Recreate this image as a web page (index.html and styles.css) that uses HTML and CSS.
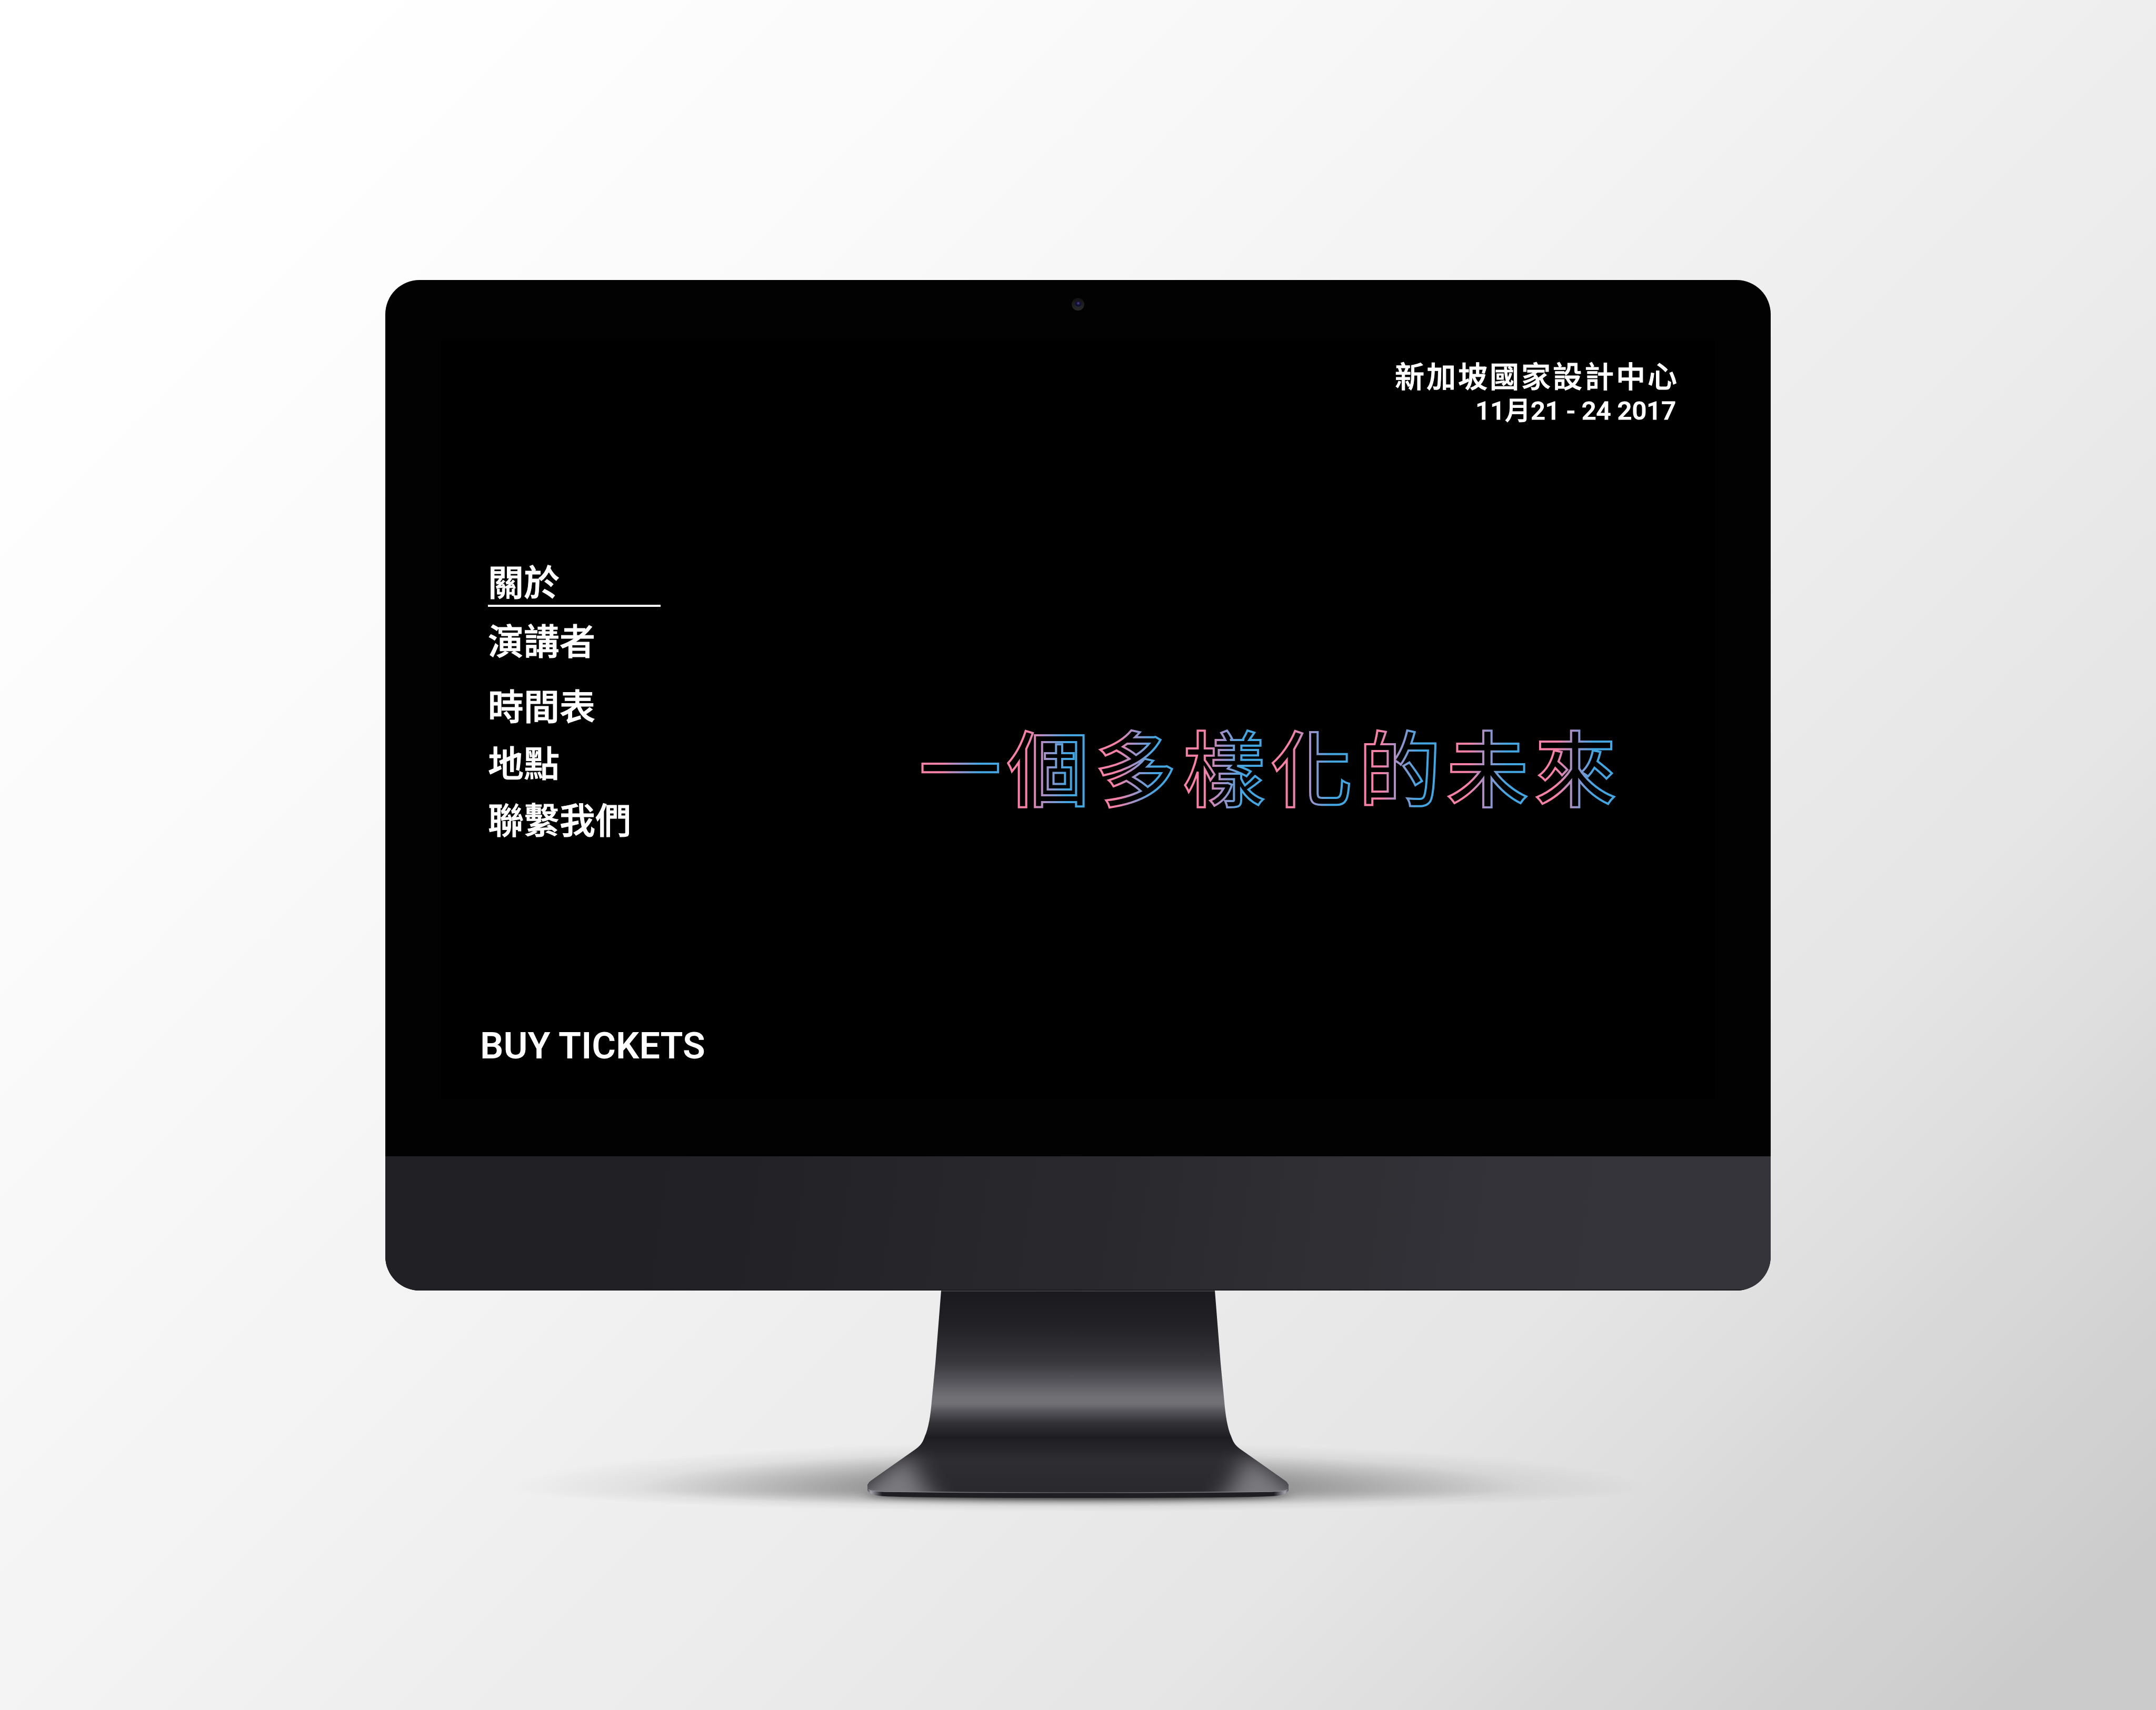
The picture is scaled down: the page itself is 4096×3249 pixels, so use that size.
FILE: index.html
```html
<!DOCTYPE html>
<html lang="zh-Hant">
<head>
<meta charset="utf-8">
<title>一個多樣化的未來</title>
<meta name="viewport" content="width=device-width, initial-scale=1">
<link rel="stylesheet" href="styles.css">
</head>
<body class="stage">
<div class="monitor">
  <div class="bezel bezel-top">
    <svg class="camera" viewBox="0 0 24 24" aria-hidden="true">
      <defs>
        <linearGradient id="ring" x1="0" y1="0" x2="0" y2="1">
          <stop offset="0" stop-color="#101010"/>
          <stop offset="1" stop-color="#2a2a2a"/>
        </linearGradient>
        <radialGradient id="lens" cx=".55" cy=".35" r=".6">
          <stop offset="0" stop-color="#565080"/>
          <stop offset=".4" stop-color="#19154a"/>
          <stop offset=".8" stop-color="#0c0a20"/>
          <stop offset="1" stop-color="#1e3644"/>
        </radialGradient>
      </defs>
      <circle cx="12" cy="12" r="12" fill="url(#ring)"/>
      <circle cx="12" cy="12" r="6" fill="url(#lens)"/>
    </svg>
  </div>
  <div class="screen">
    <header class="event">
      <p class="venue">新加坡國家設計中心</p>
      <p class="dates">11月21 - 24 2017</p>
    </header>
    <main class="content">
      <nav class="menu" aria-label="主選單">
        <ul class="menu-group">
          <li><a class="menu-link active" href="#about">關於</a></li>
          <li><a class="menu-link" href="#speakers">演講者</a></li>
        </ul>
        <ul class="menu-group">
          <li><a class="menu-link" href="#schedule">時間表</a></li>
          <li><a class="menu-link" href="#venue">地點</a></li>
          <li><a class="menu-link" href="#contact">聯繫我們</a></li>
        </ul>
      </nav>
      <h1 class="title">
        <svg class="title-art" viewBox="0 0 1336 200">
          <defs>
            <linearGradient id="tint" gradientUnits="userSpaceOnUse" x1="0" y1="0" x2="167" y2="0" spreadMethod="repeat">
              <stop offset="0" stop-color="#f780a6"/>
              <stop offset=".24" stop-color="#f780a6"/>
              <stop offset=".46" stop-color="#9b92c8"/>
              <stop offset=".68" stop-color="#44a6e1"/>
              <stop offset="1" stop-color="#44a6e1"/>
            </linearGradient>
          </defs>
          <text class="title-text" x="0" y="159">一個多樣化的未來</text>
        </svg>
      </h1>
    </main>
    <footer class="actions">
      <button class="buy" type="button">BUY TICKETS</button>
    </footer>
  </div>
  <div class="bezel bezel-bottom"></div>
  <div class="chin"></div>
</div>
<svg class="stand" viewBox="0 0 2296 480" aria-hidden="true">
  <defs>
    <linearGradient id="metal" gradientUnits="userSpaceOnUse" x1="0" y1="0" x2="0" y2="394">
      <stop offset="0" stop-color="#1a191d"/>
      <stop offset=".15" stop-color="#212025"/>
      <stop offset=".27" stop-color="#2d2c31"/>
      <stop offset=".35" stop-color="#3a393e"/>
      <stop offset=".43" stop-color="#545359"/>
      <stop offset=".51" stop-color="#706f74"/>
      <stop offset=".545" stop-color="#727176"/>
      <stop offset=".59" stop-color="#515056"/>
      <stop offset=".64" stop-color="#323136"/>
      <stop offset=".71" stop-color="#1e1d21"/>
      <stop offset=".75" stop-color="#242328"/>
      <stop offset=".82" stop-color="#2e2d32"/>
      <stop offset="1" stop-color="#29282d"/>
    </linearGradient>
    <linearGradient id="lip" gradientUnits="userSpaceOnUse" x1="748" y1="0" x2="1548" y2="0">
      <stop offset="0" stop-color="#55545b"/>
      <stop offset=".008" stop-color="#a4a3ac"/>
      <stop offset=".035" stop-color="#1f1e23"/>
      <stop offset=".965" stop-color="#1f1e23"/>
      <stop offset=".992" stop-color="#a4a3ac"/>
      <stop offset="1" stop-color="#55545b"/>
    </linearGradient>
    <linearGradient id="rim" gradientUnits="userSpaceOnUse" x1="748" y1="0" x2="1548" y2="0">
      <stop offset="0" stop-color="#8d8c93"/>
      <stop offset=".5" stop-color="#5a595e"/>
      <stop offset="1" stop-color="#8d8c93"/>
    </linearGradient>
    <radialGradient id="cast-up" gradientUnits="userSpaceOnUse" cx="0" cy="0" r="1" gradientTransform="translate(1148 376) scale(1080 88)">
      <stop offset="0" stop-color="#000" stop-opacity=".38"/>
      <stop offset=".38" stop-color="#000" stop-opacity=".34"/>
      <stop offset=".58" stop-color="#000" stop-opacity=".2"/>
      <stop offset=".78" stop-color="#000" stop-opacity=".06"/>
      <stop offset="1" stop-color="#000" stop-opacity="0"/>
    </radialGradient>
    <radialGradient id="cast-down" gradientUnits="userSpaceOnUse" cx="0" cy="0" r="1" gradientTransform="translate(1148 376) scale(1080 44)">
      <stop offset="0" stop-color="#000" stop-opacity=".38"/>
      <stop offset=".38" stop-color="#000" stop-opacity=".34"/>
      <stop offset=".58" stop-color="#000" stop-opacity=".2"/>
      <stop offset=".78" stop-color="#000" stop-opacity=".06"/>
      <stop offset="1" stop-color="#000" stop-opacity="0"/>
    </radialGradient>
    <filter id="soft" x="-30%" y="-60%" width="160%" height="220%"><feGaussianBlur stdDeviation="24 12"/></filter>
    <filter id="contact" x="-10%" y="-200%" width="120%" height="500%"><feGaussianBlur stdDeviation="14 6"/></filter>
    <clipPath id="body">
      <path d="M888 0L877 139L870 211C868 236 864 262 857 277C854 286 850 294 840 301L755 361Q748 366 748 372L748 378Q752 381 780 382Q960 384 1148 384Q1336 384 1516 382Q1544 381 1548 378L1548 372Q1548 366 1541 361L1456 301C1446 294 1442 286 1439 277C1432 262 1428 236 1426 211L1419 139L1408 0Z"/>
    </clipPath>
  </defs>
  <path d="M56 376A1092 100 0 0 1 2240 376Z" fill="url(#cast-up)"/>
  <path d="M56 376A1092 56 0 0 0 2240 376Z" fill="url(#cast-down)"/>
  <ellipse cx="1148" cy="389" rx="400" ry="7" fill="#000" fill-opacity=".8" filter="url(#contact)"/>
  <path d="M748 368L748 379Q750 387 770 390Q800 394 1148 394Q1496 394 1526 390Q1546 387 1548 379L1548 368Z" fill="url(#lip)"/>
  <g clip-path="url(#body)">
    <path d="M700 0H1596V394H700Z" fill="url(#metal)"/>
    <path d="M826 308L690 420H895Q850 370 826 308Z" fill="#7a797e" filter="url(#soft)"/>
    <path d="M1470 308L1606 420H1401Q1446 370 1470 308Z" fill="#7a797e" filter="url(#soft)"/>
  </g>
  <path d="M750 378Q754 381 780 382Q960 384 1148 384Q1336 384 1516 382Q1542 381 1546 378" fill="none" stroke="url(#rim)" stroke-width="1.5"/>
  <path d="M888 1H1408" stroke="#5f5e63" stroke-width="1"/>
</svg>
</body>
</html>
```
FILE: styles.css
```css
* { box-sizing: border-box; }

html, body { margin: 0; }

.stage {
  display: flex;
  flex-direction: column;
  min-height: 100vh;
  padding: 532px 732px 0;
  background: linear-gradient(135deg, #ffffff 8%, #fdfdfd 17%, #f6f6f6 38%, #eeeeee 56%, #e6e6e6 73%, #e0e0e0 79%, #d9d9d9 84%, #cbcbcb 96%);
  color: #ffffff;
  font-family: Roboto, "Noto Sans CJK TC", sans-serif;
  font-weight: 500;
}

.monitor {
  border-radius: 65px;
  background: #020202;
  overflow: hidden;
}

.bezel-top {
  display: flex;
  justify-content: center;
  height: 113px;
  padding-top: 34px;
}

.camera {
  width: 24px;
  height: 24px;
}

.bezel-bottom { height: 109px; }

.chin {
  height: 255px;
  background: linear-gradient(98deg, #212025 5%, #212025 20%, #29282c 50%, #343339 80%, #35343a 100%);
  border-bottom: 2px solid #1d1c21;
}

.screen {
  margin: 0 106px;
  padding: 38px 68px 59px 74px;
  background: #000000;
}

.event { text-align: right; }

.venue, .dates { margin: 0; }

.venue {
  font-size: 56px;
  line-height: 68px;
  letter-spacing: 4px;
  -webkit-text-stroke: 1px #ffffff;
}

.dates {
  padding-right: 6px;
  font-size: 49px;
  line-height: 60px;
  -webkit-text-stroke: 1px #ffffff;
}

.content {
  display: flex;
  justify-content: space-between;
  align-items: flex-end;
  margin-top: 258px;
  padding: 0 108px 0 15px;
}

.menu {
  display: flex;
  flex-direction: column;
  gap: 44px;
  width: 328px;
}

.menu-group {
  display: flex;
  flex-direction: column;
  gap: 28px;
  margin: 0;
  padding: 0;
  list-style: none;
}

.menu-link {
  display: block;
  color: inherit;
  font-size: 68px;
  line-height: 80px;
  text-decoration: none;
  -webkit-text-stroke: 1px #ffffff;
}

.active { border-bottom: 4px solid #ffffff; }

.title {
  margin: 0;
  padding-bottom: 40px;
}

.title-art {
  display: block;
  width: 1336px;
  height: 200px;
  overflow: visible;
}

.title-text {
  fill: none;
  stroke: url(#tint);
  stroke-width: 4px;
  font-family: "Noto Sans CJK TC", sans-serif;
  font-size: 156px;
  font-weight: 500;
  letter-spacing: 11px;
}

.actions { margin-top: 344px; }

.buy {
  display: block;
  padding: 0;
  border: 0;
  background: none;
  color: inherit;
  font: inherit;
  font-size: 70px;
  font-weight: 600;
  line-height: 84px;
  cursor: pointer;
}

.stand {
  align-self: center;
  width: 2296px;
  height: 480px;
}
```
